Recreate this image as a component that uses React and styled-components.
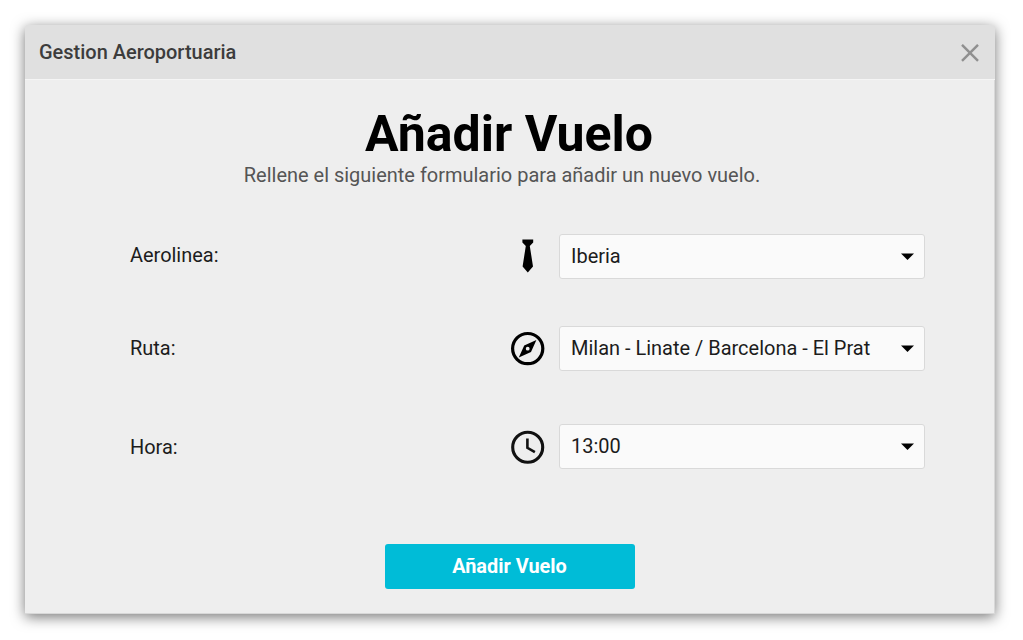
import React from "react";
import styled, { createGlobalStyle } from "styled-components";

const Global = createGlobalStyle`
  * { box-sizing: border-box; }
  body { margin: 0; background: #fff; font-family: Roboto, "Liberation Sans", sans-serif; overflow: hidden; }
`;
const Page = styled.main`
  height: 640px;
  padding: 25px 28px 26px 25px;
`;
const Dialog = styled.section`
  height: 589px;
  display: flex;
  flex-direction: column;
  background: #eee;
  border-radius: 2px 3px 0 0;
  box-shadow: inset -1px -1px 0 #d8d8d8, 0 3px 14px rgba(0, 0, 0, 0.54);
`;
const TitleBar = styled.header`
  height: 55px;
  flex: none;
  display: flex;
  align-items: center;
  justify-content: space-between;
  padding: 1px 16px 0 14px;
  background: #e0e0e0;
  border-bottom: 1px solid #f5f5f5;
  border-radius: 2px 3px 0 0;
`;
const WindowTitle = styled.span`
  padding-bottom: 2px;
  font-size: 19.98px;
  font-weight: 500;
  color: #3c3c3c;
`;
const CloseButton = styled.button`
  display: flex;
  padding: 0;
  border: 0;
  background: none;
  color: #909090;
`;
const Heading = styled.h1`
  margin: 25px 0 0;
  padding-right: 2px;
  font-size: 50px;
  line-height: 58px;
  font-weight: 700;
  text-align: center;
  color: #000;
`;
const Subtitle = styled.p`
  margin: 0;
  padding-right: 16px;
  font-size: 19.98px;
  line-height: 25px;
  text-align: center;
  color: #555;
`;
const Form = styled.form`
  display: flex;
  flex-direction: column;
  padding: 46px 70px 0 105px;
`;
const Row = styled.div`
  display: grid;
  grid-template-columns: 1fr 48px 366px;
  align-items: center;
  height: 45px;
  margin-bottom: ${(p) => p.$gap}px;
`;
const Label = styled.label`
  padding-bottom: ${(p) => p.$lift}px;
  font-size: 19.95px;
  color: #1c1c1c;
`;
const Icon = styled.svg`
  display: block;
`;
const Select = styled.div`
  height: 45px;
  display: flex;
  align-items: center;
  justify-content: space-between;
  padding: 0 10px 0 11px;
  background: #fafafa;
  border: 1px solid #d9d9d9;
  border-radius: 3px;
  font-size: 19.98px;
  color: #1c1c1c;
`;
const Value = styled.span`
  padding-bottom: 2px;
`;
const Submit = styled.button`
  align-self: center;
  width: 250px;
  height: 45px;
  margin-top: 75px;
  padding: 0 1px 1px 0;
  border: 0;
  border-radius: 3px;
  background: #00bcd7;
  color: #fff;
  font: 700 19.9px Roboto, sans-serif;
`;
const Caret = () => (
  <svg width="13" height="7" viewBox="0 0 13 7"><path d="M0 .5h13L6.5 7z" fill="#000" /></svg>
);
const Field = ({ label, value, gap, lift = 0, children }) => (
  <Row $gap={gap}>
    <Label $lift={lift}>{label}</Label>
    <Icon width="34" height="35" viewBox="0.6 0 34 35">{children}</Icon>
    <Select><Value>{value}</Value><Caret /></Select>
  </Row>
);

export default function App() {
  return (
    <Page>
      <Global />
      <Dialog>
        <TitleBar>
          <WindowTitle>Gestion Aeroportuaria</WindowTitle>
          <CloseButton type="button" aria-label="Cerrar">
            <svg width="18" height="18" viewBox="0 0 18 18"><path d="M1 .8l16 16M17 .8L1 16.8" stroke="currentColor" strokeWidth="2.4" /></svg>
          </CloseButton>
        </TitleBar>
        <Heading>Añadir Vuelo</Heading>
        <Subtitle>Rellene el siguiente formulario para añadir un nuevo vuelo.</Subtitle>
        <Form>
          <Field label="Aerolinea:" value="Iberia" gap={47} lift={4}>
            <path d="M12 .4h10.8v3L19.4 6.9l3.2 20.6-5.2 6.1-5.2-6.1 3.2-20.6L12 3.4z" />
          </Field>
          <Field label="Ruta:" value="Milan - Linate / Barcelona - El Prat" gap={53} lift={2}>
            <circle cx="17.3" cy="17.6" r="15.1" fill="none" stroke="#000" strokeWidth="3.2" />
            <path fillRule="evenodd" d="M26 8.9l-5.4 12L8.4 26.5l5.4-12zM17.3 15.8a1.9 1.9 0 1 0 0 3.8a1.9 1.9 0 1 0 0-3.8z" />
          </Field>
          <Field label="Hora:" value="13:00" gap={0}>
            <circle cx="17.3" cy="18.3" r="15" fill="none" stroke="#111" strokeWidth="3.1" />
            <path d="M17 9.6v9.2l7.5 4.4" fill="none" stroke="#111" strokeWidth="2.6" />
          </Field>
        </Form>
        <Submit type="button">Añadir Vuelo</Submit>
      </Dialog>
    </Page>
  );
}
